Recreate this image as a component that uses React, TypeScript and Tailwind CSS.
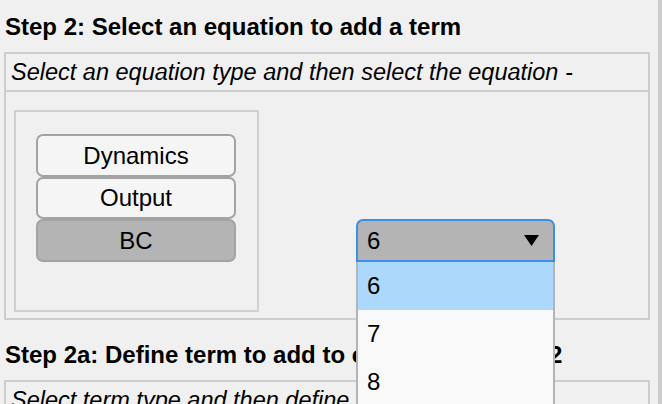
export default function App() {
  const font = { fontFamily: '"Liberation Sans", Arial, sans-serif' };
  return (
    <div
      className="relative h-[404px] w-[662px] overflow-hidden bg-[#f0f0f0] text-black"
      style={font}
    >
      <div className="flex h-full">
        <div className="flex-1 pl-[4px]">
          {/* Step 2 */}
          <h2 className="pl-[1px] pt-[14px] text-[24px] font-bold leading-[26px]">
            Step 2: Select an equation to add a term
          </h2>
          <div className="mt-[12px] w-[646px] border-2 border-[#cdcdcd]">
            <div className="h-[38px] border-b-2 border-[#cdcdcd] pl-[5px] text-[23.5px] italic leading-[36px]">
              Select an equation type and then select the equation -
            </div>
            <div className="relative z-20 flex h-[226px] pl-[8px] pt-[18px]">
              <div className="h-[202px] w-[245px] border-2 border-[#d0d0d0] pl-[20px] pt-[22px]">
                <div className="flex w-[200px] flex-col">
                  <button className="h-[43px] rounded-[7px] border-2 border-[#a3a3a3] bg-[#f5f5f5] text-[24px]">
                    Dynamics
                  </button>
                  <button className="h-[42px] rounded-[7px] border-2 border-[#a3a3a3] bg-[#f5f5f5] text-[24px]">
                    Output
                  </button>
                  <button className="h-[43px] rounded-[7px] border-2 border-[#a3a3a3] bg-[#b4b4b4] text-[24px]">
                    BC
                  </button>
                </div>
              </div>
              {/* Select with open list */}
              <div className="relative ml-[97px] mt-[109px] h-[43px] w-[199px]">
                <div className="flex h-full items-center justify-between rounded-t-[7px] border-2 border-[#3d8ee8] bg-[#b4b4b4] pl-[9px] pr-[14px] text-[24px]">
                  <span>6</span>
                  <svg width="15" height="11" viewBox="0 0 15 11">
                    <path d="M0 0 H15 L7.5 11 Z" fill="#000" />
                  </svg>
                </div>
                <ul className="absolute left-0 top-[43px] z-30 w-[199px] border-x-2 border-[#b4b4b4] bg-[#f9f9f9] text-[24px]">
                  <li className="flex h-[48px] items-center bg-[#acd8fb] pl-[9px]">6</li>
                  <li className="flex h-[48px] items-center pl-[9px]">7</li>
                  <li className="flex h-[48px] items-center pl-[9px]">8</li>
                  <li className="flex h-[48px] items-center pl-[9px]">9</li>
                </ul>
              </div>
            </div>
          </div>
          {/* Step 2a */}
          <h2 className="whitespace-nowrap pl-[1px] pt-[22px] text-[24px] font-bold leading-[26px]">
            Step 2a: Define term to add to equation BC 6 of 2
          </h2>
          <div className="mt-[12px] w-[646px] border-2 border-[#cdcdcd]">
            <div className="h-[38px] border-b-2 border-[#cdcdcd] pl-[5px] text-[23.5px] italic leading-[36px]">
              Select term type and then define the term -
            </div>
          </div>
        </div>
        <div className="h-full w-[4px] bg-[#cccccc]" />
      </div>
    </div>
  );
}
